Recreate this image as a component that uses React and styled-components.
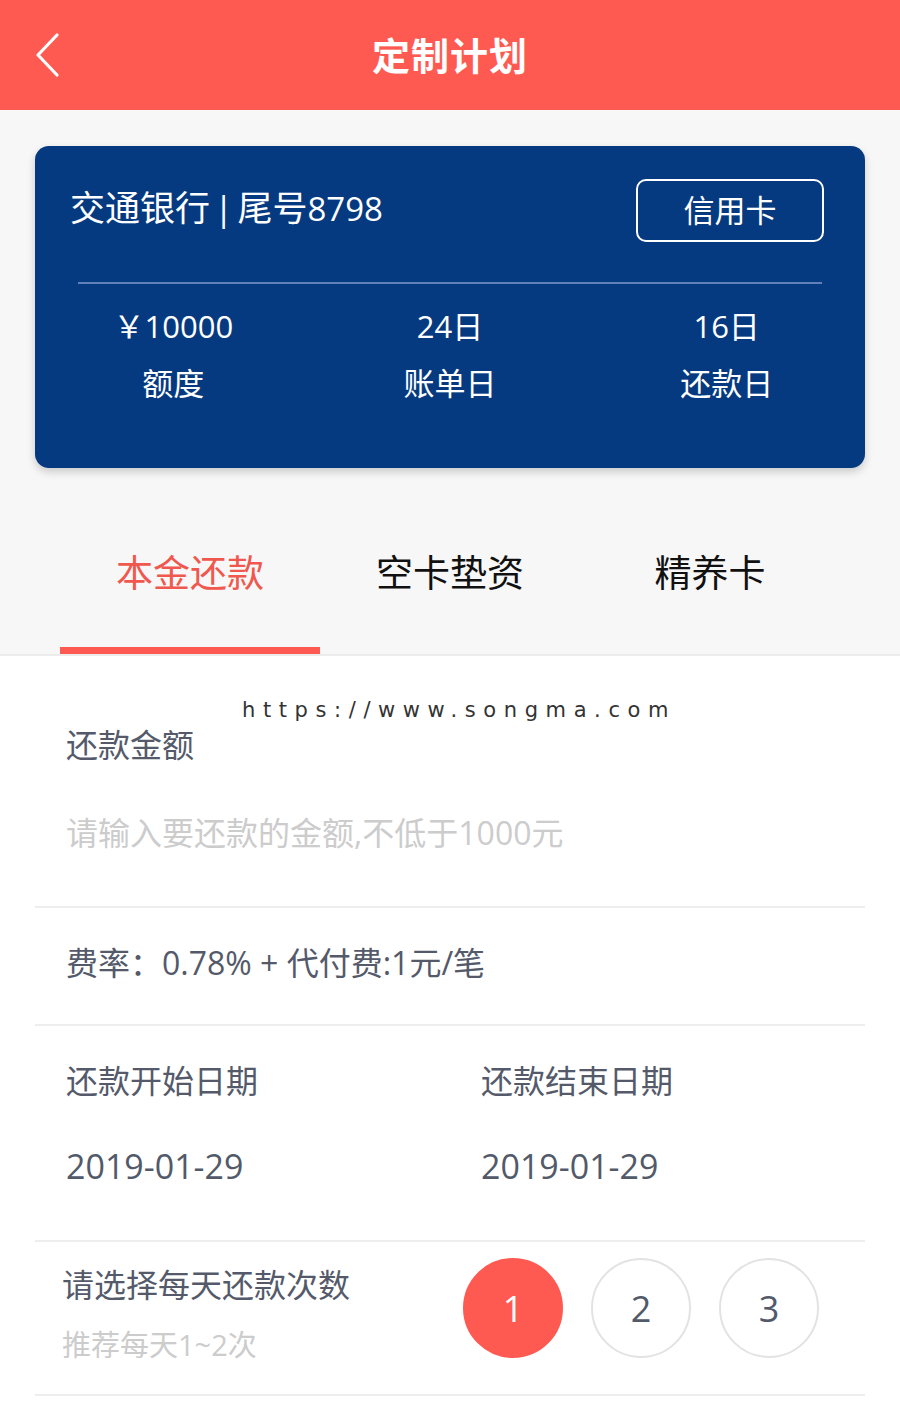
import React, { useState } from 'react'
import styled, { createGlobalStyle } from 'styled-components'

const GlobalStyle = createGlobalStyle`
    body {
        margin: 0;
        background: #fff;
        font-family: "Open Sans", "Noto Sans CJK SC", sans-serif;
    }
`

const Page = styled.div`
    width: 900px;
    min-height: 1421px;
    background: #fff;
`

const Header = styled.div`
    display: grid;
    grid-template-columns: 100px 1fr 100px;
    align-items: center;
    height: 110px;
    background-color: #FF5A51;
    color: white;
`
const BackBtn = styled.div`
    display: flex;
    align-items: center;
    padding-left: 33px;
    height: 50px;
`
const HeaderTitle = styled.h1`
    margin: 0 0 4px;
    text-align: center;
    font-family: "Noto Sans CJK SC", sans-serif;
    font-size: 38px;
    font-weight: 700;
    letter-spacing: 1px;
`

const GraySection = styled.div`
    background: #F7F7F7;
    padding: 36px 35px 0;
    border-bottom: 2px solid #ececec;
`

const Card = styled.div`
    background: #063A80;
    border-radius: 14px;
    padding: 33px 0 56px;
    color: #fff;
    box-shadow: 0 4px 8px rgba(0, 0, 0, 0.18);
`
const CardTop = styled.div`
    display: flex;
    justify-content: space-between;
    align-items: center;
    padding: 0 41px 0 35px;
`
const BankName = styled.div`
    font-size: 35px;
    line-height: 44px;
    margin-bottom: 4px;
    word-spacing: -5px;
`
const Digits = styled.span`
    font-size: 33px;
`
const CardTag = styled.div`
    width: 184px;
    height: 55px;
    border: 2px solid #fff;
    border-radius: 10px;
    display: flex;
    justify-content: center;
    align-items: center;
    font-family: "Noto Sans CJK SC", sans-serif;
    font-size: 31px;
    padding-bottom: 4px;
    box-sizing: content-box;
`
const CardLine = styled.div`
    height: 2px;
    background: #5f80b8;
    margin: 40px 43px 14px;
`
const Stats = styled.div`
    display: grid;
    grid-template-columns: repeat(3, 1fr);
    text-align: center;
`
const StatValue = styled.div`
    font-size: 31px;
    line-height: 57px;
`
const StatLabel = styled.div`
    font-size: 31px;
    line-height: 57px;
`

const Tabs = styled.div`
    display: grid;
    grid-template-columns: repeat(3, 260px);
    margin: 55px 0 0 25px;
`
const Tab = styled.div`
    text-align: center;
    font-size: 37px;
    line-height: 100px;
    padding-bottom: 24px;
    color: ${p => (p.$active ? '#F0574E' : '#111')};
    border-bottom: 7px solid ${p => (p.$active ? '#FF5A51' : 'transparent')};
    cursor: pointer;
`

const Form = styled.div`
    padding: 0 35px;
`
const Row = styled.div`
    position: relative;
    border-bottom: 2px solid #eeeeee;
    padding: ${p => p.$pad || '33px 31px 39px'};
`
const Watermark = styled.div`
    position: absolute;
    left: 207px;
    top: 42px;
    font-family: "DejaVu Sans", sans-serif;
    font-size: 21px;
    letter-spacing: 7.6px;
    color: #333;
`
const Label = styled.div`
    font-size: 32px;
    line-height: 44px;
    color: #545A6A;
`
const Placeholder = styled.input`
    display: block;
    width: 100%;
    border: none;
    outline: none;
    padding: 0;
    margin-top: 44px;
    font-family: inherit;
    font-size: 32px;
    line-height: 44px;
    height: 44px;
    color: #545A6A;
    &::placeholder {
        color: #CCCCCC;
    }
`
const DateGrid = styled.div`
    display: grid;
    grid-template-columns: 415px 1fr;
`
const DateValue = styled.div`
    font-size: 34px;
    line-height: 44px;
    color: #525A6A;
    margin-top: 41px;
`
const CountRow = styled.div`
    display: flex;
    justify-content: space-between;
    align-items: flex-start;
    border-bottom: 2px solid #eeeeee;
    padding: 16px 46px 29px 27px;
`
const CountText = styled.div`
    padding-top: 5px;
`
const Hint = styled.div`
    font-size: 29px;
    line-height: 40px;
    color: #CCCCCC;
    margin-top: 18px;
`
const Circles = styled.div`
    display: flex;
    gap: 28px;
`
const Circle = styled.div`
    width: 100px;
    height: 100px;
    box-sizing: border-box;
    border-radius: 50%;
    display: flex;
    justify-content: center;
    align-items: center;
    font-size: 36px;
    cursor: pointer;
    background: ${p => (p.$active ? '#FF5A51' : '#fff')};
    color: ${p => (p.$active ? '#fff' : '#525A6A')};
    border: 2px solid ${p => (p.$active ? '#FF5A51' : '#e3e3e3')};
`

const stats = [
    { value: '￥10000', label: '额度' },
    { value: '24日', label: '账单日' },
    { value: '16日', label: '还款日' },
]
const tabs = ['本金还款', '空卡垫资', '精养卡']

function App() {
    const [tab, setTab] = useState(0)
    const [times, setTimes] = useState(1)

    return (
        <>
        <GlobalStyle />
        <Page>
        <Header>
            <BackBtn>
                <svg width="28" height="46" viewBox="0 0 28 46">
                    <path d="M24 3 L5 23 L24 43" fill="none" stroke="#fff" strokeWidth="3.2" strokeLinecap="round" strokeLinejoin="round" />
                </svg>
            </BackBtn>
            <HeaderTitle>定制计划</HeaderTitle>
            <div />
        </Header>

        <GraySection>
            <Card>
                <CardTop>
                    <BankName>交通银行 | 尾号<Digits>8798</Digits></BankName>
                    <CardTag>信用卡</CardTag>
                </CardTop>
                <CardLine />
                <Stats>
                    {stats.map(s => (
                        <div key={s.label}>
                            <StatValue>{s.value}</StatValue>
                            <StatLabel>{s.label}</StatLabel>
                        </div>
                    ))}
                </Stats>
            </Card>
            <Tabs>
                {tabs.map((t, i) => (
                    <Tab key={t} $active={i === tab} onClick={() => setTab(i)}>{t}</Tab>
                ))}
            </Tabs>
        </GraySection>

        <Form>
            <Row $pad="67px 31px 51px">
                <Watermark>https://www.songma.com</Watermark>
                <Label>还款金额</Label>
                <Placeholder placeholder="请输入要还款的金额,不低于1000元" />
            </Row>
            <Row>
                <Label>费率：0.78% + 代付费:1元/笔</Label>
            </Row>
            <Row $pad="33px 31px 52px">
                <DateGrid>
                    <div>
                        <Label>还款开始日期</Label>
                        <DateValue>2019-01-29</DateValue>
                    </div>
                    <div>
                        <Label>还款结束日期</Label>
                        <DateValue>2019-01-29</DateValue>
                    </div>
                </DateGrid>
            </Row>
            <CountRow>
                <CountText>
                    <Label>请选择每天还款次数</Label>
                    <Hint>推荐每天1~2次</Hint>
                </CountText>
                <Circles>
                    {[1, 2, 3].map(n => (
                        <Circle key={n} $active={n === times} onClick={() => setTimes(n)}>{n}</Circle>
                    ))}
                </Circles>
            </CountRow>
        </Form>
        </Page>
        </>
    )
}

export default App
